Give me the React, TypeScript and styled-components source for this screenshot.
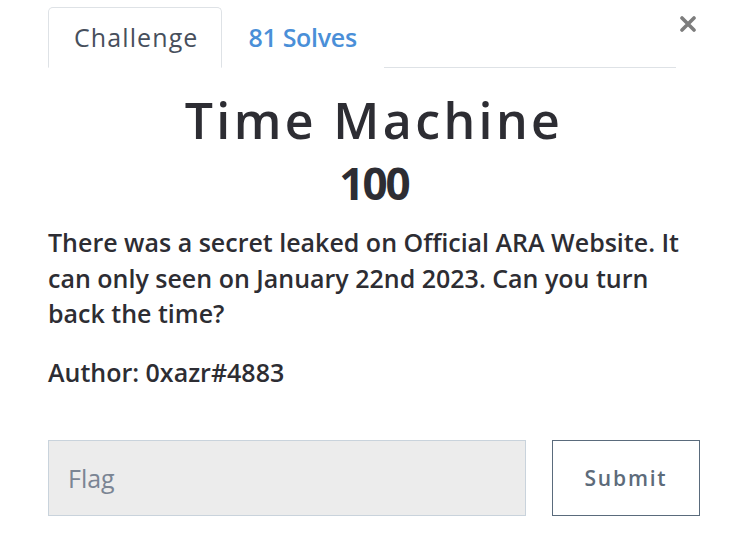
import React from "react";
import styled, { createGlobalStyle } from "styled-components";

const Global = createGlobalStyle`
  html, body { margin: 0; padding: 0; background: #ffffff; }
  body { font-family: "Open Sans", "Liberation Sans", sans-serif; color: #2f2f35; }
  * { box-sizing: border-box; }
`;

const Modal = styled.div`
  position: relative;
  width: 742px;
  height: 536px;
  padding: 7px 42px 0 48px;
  overflow: hidden;
`;

const CloseButton = styled.button`
  position: absolute;
  top: 16px;
  right: 46px;
  width: 16px;
  height: 16px;
  padding: 0;
  border: 0;
  background: transparent;
  display: flex;
  align-items: center;
  justify-content: center;
  cursor: pointer;
`;

const TabNav = styled.nav`
  display: flex;
  width: 628px;
  border-bottom: 1px solid #dee2e6;
`;

const Tab = styled.a<{ $active?: boolean }>`
  display: flex;
  align-items: center;
  height: 61px;
  margin-bottom: -1px;
  padding: 0 ${(p) => (p.$active ? "23px" : "26px")} 2px 25px;
  font-size: 25px;
  font-weight: ${(p) => (p.$active ? 500 : 600)};
  letter-spacing: ${(p) => (p.$active ? "1.1px" : "-0.3px")};
  color: ${(p) => (p.$active ? "#474f5c" : "#4a8fd8")};
  background: #fff;
  border: 1px solid ${(p) => (p.$active ? "#dee2e6" : "transparent")};
  border-bottom-color: ${(p) => (p.$active ? "#fff" : "transparent")};
  border-radius: 5px 5px 0 0;
  text-decoration: none;
`;

const Body = styled.section`
  display: flex;
  flex-direction: column;
  width: 652px;
`;

const Title = styled.h1`
  margin: 22px 0 0;
  text-align: center;
  font-size: 50px;
  line-height: 60px;
  font-weight: 600;
  letter-spacing: 3.4px;
  color: #2d2d33;
`;

const Points = styled.h2`
  margin: 3px 0 0;
  text-align: center;
  font-size: 44px;
  line-height: 60px;
  font-weight: 700;
  letter-spacing: -2px;
  color: #2d2d33;
`;

const Description = styled.div`
  margin-top: 12px;
  font-size: 25px;
  line-height: 35.5px;
  font-weight: 600;
  color: #2d2d33;

  p {
    margin: 0 0 23.5px;
  }
`;

const FlagForm = styled.form`
  display: flex;
  gap: 26px;
  margin-top: 26px;
`;

const FlagInput = styled.input`
  width: 478px;
  height: 76px;
  padding: 0 19px;
  font-family: inherit;
  font-size: 25px;
  color: #333;
  background: #ececec;
  border: 1px solid #c9d3dc;
  border-radius: 0;
  outline: none;

  &::placeholder {
    color: #7b8594;
  }
`;

const SubmitButton = styled.button`
  width: 148px;
  height: 76px;
  padding: 0;
  font-family: inherit;
  font-size: 21px;
  font-weight: 600;
  letter-spacing: 1.8px;
  color: #5d6b7a;
  background: #fff;
  border: 1px solid #5a6b7c;
  border-radius: 0;
  cursor: pointer;
`;

export default function App() {
  return (
    <>
      <Global />
      <Modal>
        <CloseButton aria-label="Close">
          <svg width="16" height="16" viewBox="0 0 16 16">
            <path d="M2 2 L14 14 M14 2 L2 14" stroke="#7d7d7d" strokeWidth="3.6" strokeLinecap="round" />
          </svg>
        </CloseButton>
        <TabNav>
          <Tab $active href="#">Challenge</Tab>
          <Tab href="#">81 Solves</Tab>
        </TabNav>
        <Body>
          <Title>Time Machine</Title>
          <Points>100</Points>
          <Description>
            <p>There was a secret leaked on Official ARA Website. It can only seen on January 22nd 2023. Can you turn back the time?</p>
            <p>Author: 0xazr#4883</p>
          </Description>
          <FlagForm onSubmit={(e) => e.preventDefault()}>
            <FlagInput placeholder="Flag" />
            <SubmitButton type="submit">Submit</SubmitButton>
          </FlagForm>
        </Body>
      </Modal>
    </>
  );
}
